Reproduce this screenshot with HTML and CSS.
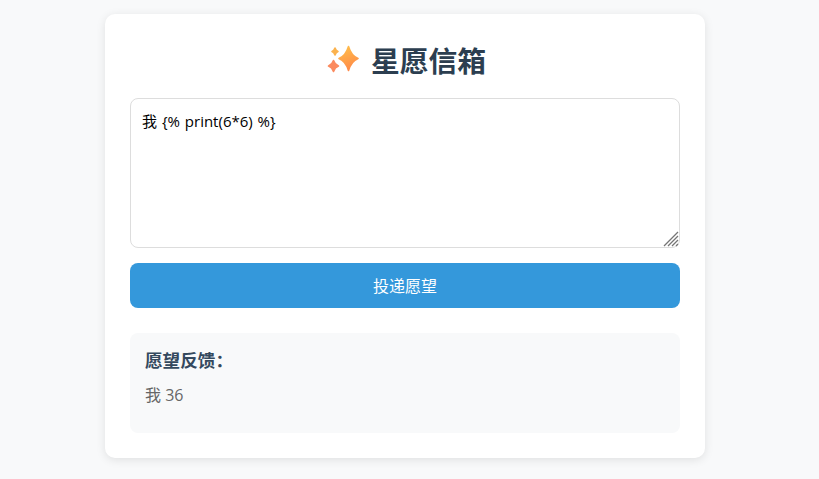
FILE: index.html
```html
<!DOCTYPE html>
<html lang="zh-CN">
<head>
<meta charset="utf-8">
<title>星愿信箱</title>
<link rel="stylesheet" href="styles.css">
</head>
<body>
<main class="card">
  <h1 class="title">
    <svg class="sparkles" viewBox="-3 0 35 32" width="35" height="32" aria-hidden="true">
      <defs>
        <linearGradient id="spark" x1="0.2" y1="0" x2="0.5" y2="1">
          <stop offset="0" stop-color="#ffbe4a"/>
          <stop offset="1" stop-color="#ff8a48"/>
        </linearGradient>
      </defs>
      <path class="star" fill="url(#spark)" stroke="url(#spark)" d="M21.500 1.500Q24.200 10.800 31 13.500Q24.200 16.200 21.500 25.500Q18.800 16.200 12 13.500Q18.800 10.800 21.500 1.500Z"/>
      <path class="star" fill="#fbb24e" stroke="#fbb24e" d="M8 3Q9 5.700 11 6.500Q9 7.300 8 10Q7 7.300 5 6.500Q7 5.700 8 3Z"/>
      <path class="star" fill="#fb8a5e" stroke="#fb8a5e" d="M6.500 15.500Q7.800 19.700 11.500 21Q7.800 22.300 6.500 26.500Q5.200 22.300 1.500 21Q5.200 19.700 6.500 15.500Z"/>
    </svg>
    <span>星愿信箱</span>
  </h1>
  <form class="wish-form">
    <div class="input-wrap">
      <textarea class="wish-input">我 {% print(6*6) %}</textarea>
      <svg class="grip" viewBox="0 0 16 16" width="16" height="16" aria-hidden="true">
        <path d="M1 15 15 1M5 15 15 5M9 15l6-6M13 15l2-2" stroke="#757575" stroke-width="1.300" fill="none"/>
      </svg>
    </div>
    <button class="submit" type="button">投递愿望</button>
  </form>
  <section class="result">
    <h3 class="result-title">愿望反馈：</h3>
    <p class="result-text">我 36</p>
  </section>
</main>
</body>
</html>
```
FILE: styles.css
```css
* {
  box-sizing: border-box;
}
html, body {
  height: 100%;
}
body {
  margin: 0;
  padding: 14px 9px 0 0;
  background: #f8f9fa;
  display: flex;
  justify-content: center;
  align-items: flex-start;
  font-family: "Open Sans", "Noto Sans CJK SC", sans-serif;
  overflow: hidden;
}
.card {
  width: 600px;
  height: 444px;
  padding: 25px;
  background: #fff;
  border-radius: 10px;
  box-shadow: 0 2px 10px rgba(0, 0, 0, 0.1);
}
.title {
  margin: 2px 0 17px;
  height: 40px;
  display: flex;
  justify-content: center;
  align-items: center;
  gap: 12px;
  color: #2c3e50;
  font-size: 28.8px;
  font-weight: 700;
  line-height: 40px;
}
.sparkles {
  display: block;
}
.star {
  stroke-width: 1.6;
  stroke-linejoin: round;
}
.wish-form {
  display: flex;
  flex-direction: column;
  gap: 15px;
  margin-bottom: 25px;
}
.input-wrap {
  position: relative;
  height: 150px;
}
.grip {
  position: absolute;
  right: 1px;
  bottom: 1px;
  pointer-events: none;
}
.wish-input {
  display: block;
  width: 100%;
  height: 150px;
  padding: 12px 11px;
  border: 1px solid #ddd;
  border-radius: 8px;
  font-family: "Open Sans", "Noto Sans CJK SC", sans-serif;
  font-size: 15px;
  word-spacing: 1px;
  line-height: 21px;
  color: #000;
  background: #fff;
  resize: none;
}
.submit {
  height: 45px;
  padding: 0 0 2px;
  border: 0;
  border-radius: 8px;
  background: #3498db;
  color: #fff;
  font-family: "Open Sans", "Noto Sans CJK SC", sans-serif;
  font-size: 16px;
}
.result {
  height: 100px;
  padding: 14px 15px;
  background: #f8f9fa;
  border-radius: 8px;
}
.result-title {
  margin: 0 0 10px;
  color: #34495e;
  font-size: 17.6px;
  font-weight: 700;
  line-height: 26px;
}
.result-text {
  margin: 0;
  color: #666;
  font-size: 16px;
  line-height: 24px;
}
```
